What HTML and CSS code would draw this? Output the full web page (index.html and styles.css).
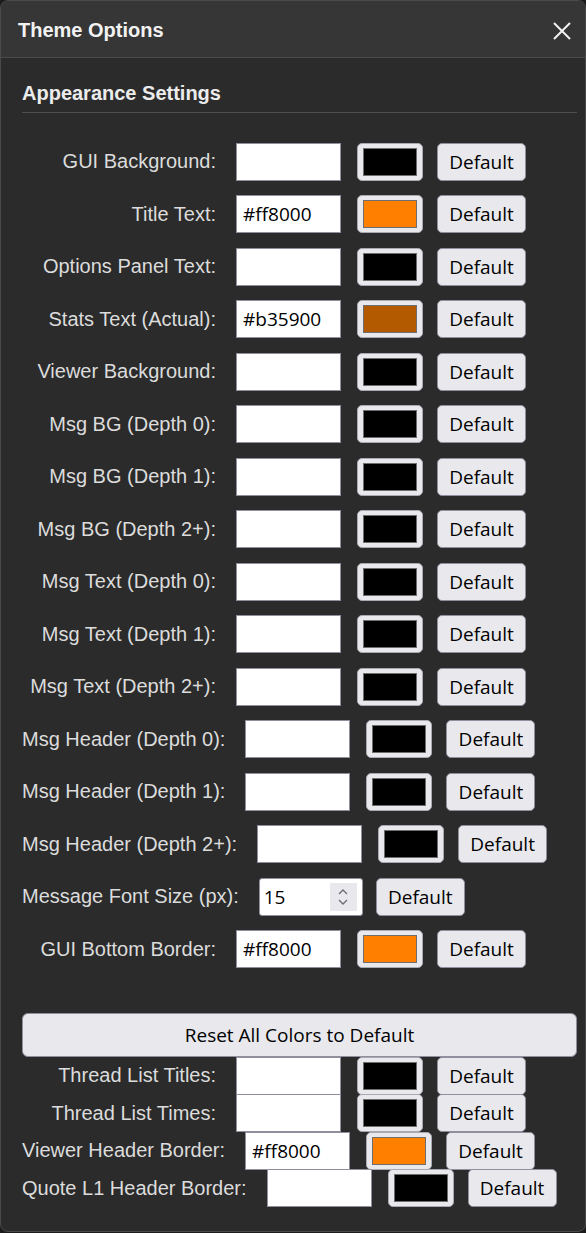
FILE: index.html
```html
<!DOCTYPE html>
<html lang="en">
<head>
<meta charset="utf-8">
<title>Theme Options</title>
<link rel="stylesheet" href="styles.css">
</head>
<body>
<div class="modal">
  <div class="modal-header">
    <h2 class="modal-title">Theme Options</h2>
    <button class="close" aria-label="Close">
      <svg width="20" height="20" viewBox="0 0 20 20"><path d="M2 2 L18 18 M18 2 L2 18" stroke="#f2f2f2" stroke-width="2" fill="none"/></svg>
    </button>
  </div>
  <div class="modal-body">
    <h3 class="section-title">Appearance Settings</h3>
    <div class="rows">
      <div class="row"><label class="lbl">GUI Background:</label><input class="hex" type="text" value=""><span class="swatch"><span class="chip c-black"></span></span><button class="btn">Default</button></div>
      <div class="row"><label class="lbl">Title Text:</label><input class="hex" type="text" value="#ff8000"><span class="swatch"><span class="chip c-orange"></span></span><button class="btn">Default</button></div>
      <div class="row"><label class="lbl">Options Panel Text:</label><input class="hex" type="text" value=""><span class="swatch"><span class="chip c-black"></span></span><button class="btn">Default</button></div>
      <div class="row"><label class="lbl">Stats Text (Actual):</label><input class="hex" type="text" value="#b35900"><span class="swatch"><span class="chip c-brown"></span></span><button class="btn">Default</button></div>
      <div class="row"><label class="lbl">Viewer Background:</label><input class="hex" type="text" value=""><span class="swatch"><span class="chip c-black"></span></span><button class="btn">Default</button></div>
      <div class="row"><label class="lbl">Msg BG (Depth 0):</label><input class="hex" type="text" value=""><span class="swatch"><span class="chip c-black"></span></span><button class="btn">Default</button></div>
      <div class="row"><label class="lbl">Msg BG (Depth 1):</label><input class="hex" type="text" value=""><span class="swatch"><span class="chip c-black"></span></span><button class="btn">Default</button></div>
      <div class="row"><label class="lbl">Msg BG (Depth 2+):</label><input class="hex" type="text" value=""><span class="swatch"><span class="chip c-black"></span></span><button class="btn">Default</button></div>
      <div class="row"><label class="lbl">Msg Text (Depth 0):</label><input class="hex" type="text" value=""><span class="swatch"><span class="chip c-black"></span></span><button class="btn">Default</button></div>
      <div class="row"><label class="lbl">Msg Text (Depth 1):</label><input class="hex" type="text" value=""><span class="swatch"><span class="chip c-black"></span></span><button class="btn">Default</button></div>
      <div class="row"><label class="lbl">Msg Text (Depth 2+):</label><input class="hex" type="text" value=""><span class="swatch"><span class="chip c-black"></span></span><button class="btn">Default</button></div>
      <div class="row"><label class="lbl">Msg Header (Depth 0):</label><input class="hex" type="text" value=""><span class="swatch"><span class="chip c-black"></span></span><button class="btn">Default</button></div>
      <div class="row"><label class="lbl">Msg Header (Depth 1):</label><input class="hex" type="text" value=""><span class="swatch"><span class="chip c-black"></span></span><button class="btn">Default</button></div>
      <div class="row"><label class="lbl">Msg Header (Depth 2+):</label><input class="hex" type="text" value=""><span class="swatch"><span class="chip c-black"></span></span><button class="btn">Default</button></div>
      <div class="row"><label class="lbl">Message Font Size (px):</label>
        <div class="num"><span class="num-val">15</span><span class="spin"><svg width="14" height="22" viewBox="0 0 14 22"><path d="M3 8 L7 4 L11 8 M3 14 L7 18 L11 14" stroke="#6b6b75" stroke-width="1.3" fill="none"/></svg></span></div>
        <button class="btn btn-num">Default</button></div>
      <div class="row"><label class="lbl">GUI Bottom Border:</label><input class="hex" type="text" value="#ff8000"><span class="swatch"><span class="chip c-orange"></span></span><button class="btn">Default</button></div>
    </div>
    <button class="reset">Reset All Colors to Default</button>
    <div class="rows tight">
      <div class="row"><label class="lbl">Thread List Titles:</label><input class="hex" type="text" value=""><span class="swatch"><span class="chip c-black"></span></span><button class="btn">Default</button></div>
      <div class="row"><label class="lbl">Thread List Times:</label><input class="hex" type="text" value=""><span class="swatch"><span class="chip c-black"></span></span><button class="btn">Default</button></div>
      <div class="row"><label class="lbl">Viewer Header Border:</label><input class="hex" type="text" value="#ff8000"><span class="swatch"><span class="chip c-orange"></span></span><button class="btn">Default</button></div>
      <div class="row"><label class="lbl">Quote L1 Header Border:</label><input class="hex" type="text" value=""><span class="swatch"><span class="chip c-black"></span></span><button class="btn">Default</button></div>
    </div>
  </div>
</div>
</body>
</html>
```
FILE: styles.css
```css
html, body {
  margin: 0;
  padding: 0;
  background: #1c1c1c;
}
body {
  font-family: "Liberation Sans", Arial, sans-serif;
  width: 586px;
  height: 1233px;
}
.modal {
  box-sizing: border-box;
  width: 586px;
  height: 1232px;
  background: #2b2b2b;
  border: 1px solid #4a4a4a;
  border-radius: 8px;
  overflow: hidden;
}
.modal-header {
  height: 56px;
  background: #363636;
  border-bottom: 1px solid #4a4a4a;
  display: flex;
  align-items: center;
  justify-content: space-between;
  padding: 0 12px 0 17px;
}
.modal-title {
  margin: 2px 0 0 0;
  font-size: 20px;
  font-weight: bold;
  color: #f2f2f2;
}
.close {
  background: none;
  border: 0;
  padding: 0;
  width: 22px;
  height: 22px;
  display: flex;
  align-items: center;
  justify-content: center;
  margin-top: 4px;
}
.modal-body {
  padding: 24px 8px 0 21px;
}
.section-title {
  margin: 0 0 30px 0;
  font-size: 20px;
  font-weight: bold;
  line-height: 23px;
  color: #ececec;
  padding-bottom: 7px;
  border-bottom: 1px solid #4e4e4e;
}
.rows {
  display: flex;
  flex-direction: column;
}
.row {
  display: flex;
  align-items: center;
  height: 37.5px;
  margin-bottom: 15px;
}
.rows.tight .row {
  margin-bottom: 0;
}
.lbl {
  min-width: 194px;
  text-align: right;
  margin-right: 20px;
  font-size: 20px;
  color: #dcdcdc;
  white-space: nowrap;
}
.hex {
  box-sizing: border-box;
  width: 105px;
  height: 38px;
  margin: 0 16px 0 0;
  padding: 0 6px;
  border: 1px solid #8f8f9d;
  background: #fff;
  font-family: "Open Sans", sans-serif;
  font-size: 19px;
  color: #000;
  outline: none;
}
.swatch {
  box-sizing: border-box;
  width: 66px;
  height: 38px;
  margin-right: 14px;
  border: 1px solid #a9a9b2;
  border-radius: 5px;
  background: #e9e9ed;
  padding: 4px 5px;
  display: flex;
}
.chip {
  flex: 1;
  border: 1px solid #6e6e6e;
}
.c-black { background: #000; }
.c-orange { background: #ff8000; }
.c-brown { background: #b35900; }
.btn {
  box-sizing: border-box;
  width: 89px;
  height: 38px;
  padding: 0;
  border: 1px solid #8f8f9d;
  border-radius: 5px;
  background: #e9e9ed;
  color: #000;
  font-family: "Open Sans", sans-serif;
  font-size: 19px;
}
.num {
  box-sizing: border-box;
  width: 104px;
  height: 38px;
  margin-right: 13px;
  border: 1px solid #8f8f9d;
  border-radius: 3px;
  background: #fff;
  display: flex;
  align-items: center;
  justify-content: space-between;
  padding: 0 5px 0 4px;
}
.num-val {
  font-family: "Open Sans", sans-serif;
  font-size: 19px;
  color: #000;
}
.spin {
  width: 27px;
  height: 28px;
  background: #e9e9ed;
  display: flex;
  align-items: center;
  justify-content: center;
}
.reset {
  box-sizing: border-box;
  display: block;
  width: 555px;
  height: 44px;
  margin-top: 30px;
  border: 1px solid #8f8f9d;
  border-radius: 6px;
  background: #e9e9ed;
  color: #000;
  font-family: "Open Sans", sans-serif;
  font-size: 19px;
}
```
